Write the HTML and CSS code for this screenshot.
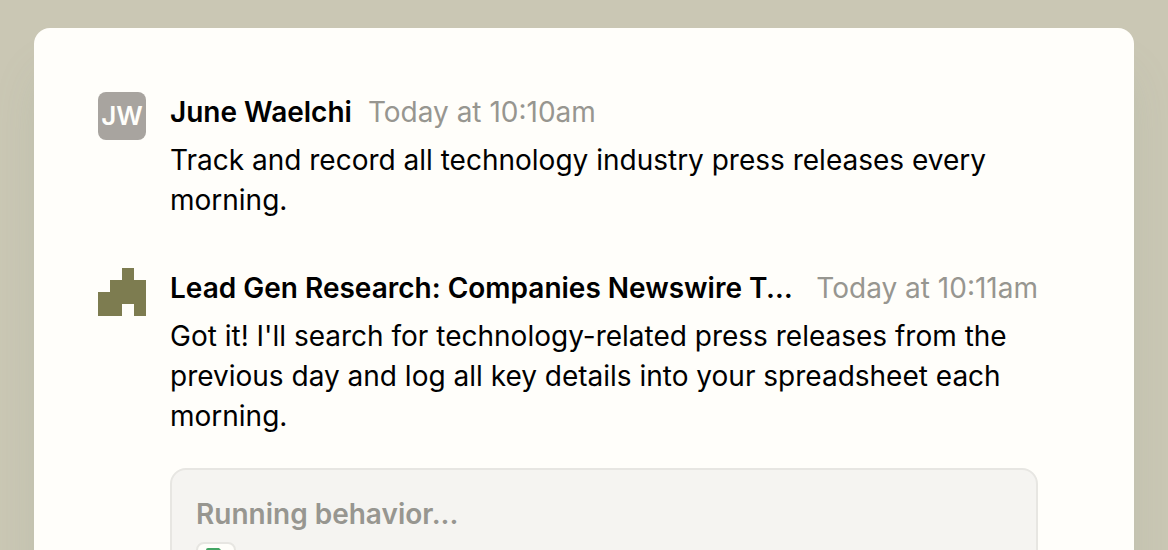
FILE: index.html
```html
<!DOCTYPE html>
<html lang="en">
  <head>
    <meta charset="utf-8" />
    <meta name="viewport" content="width=device-width, initial-scale=1.0" />
    <link rel="stylesheet" href="styles.css">
    <title>Lead Gen Research</title>
  </head>

  <body>
    <main class="thread">
      <article class="message">
        <div class="avatar initials">JW</div>
        <div class="content">
          <header class="meta">
            <h2 class="author">June Waelchi</h2>
            <time class="time">Today at 10:10am</time>
          </header>
          <p class="text">Track and record all technology industry press releases every morning.</p>
        </div>
      </article>

      <article class="message">
        <svg class="avatar" viewBox="0 0 4 4" shape-rendering="crispEdges" aria-hidden="true">
          <path fill="#7d7c50" d="M2 0h1v1h1v3H3V3H2v1H0V2h1V1h1z" />
        </svg>
        <div class="content">
          <header class="meta">
            <h2 class="author">Lead Gen Research: Companies Newswire Tracker</h2>
            <time class="time">Today at 10:11am</time>
          </header>
          <p class="text">Got it! I'll search for technology-related press releases from the previous day and log all key details into your spreadsheet each morning.</p>

          <section class="behavior">
            <h3 class="behavior-title">Running behavior...</h3>
            <div class="app">
              <svg class="app-icon" viewBox="0 0 24 24" aria-hidden="true">
                <path fill="#43a563" d="M4 0h11l6 6v16a2 2 0 0 1-2 2H4a2 2 0 0 1-2-2V2a2 2 0 0 1 2-2z" />
                <path fill="#fff" d="M7 11h9v8H7zM8 12v2h3v-2zm4 0v2h3v-2zm-4 3v3h3v-3zm4 0v3h3v-3z" fill-rule="evenodd" />
              </svg>
            </div>
          </section>
        </div>
      </article>
    </main>
  </body>
</html>
```
FILE: styles.css
```css
* {
  box-sizing: border-box;
}

body {
  margin: 0;
  height: 100vh;
  padding: 28px 34px 0;
  overflow: hidden;
  background: #cac7b4;
  color: #000;
  font-family: Inter, sans-serif;
  font-size: 28px;
  line-height: 40px;
}

h2,
h3,
p {
  margin: 0;
  font-size: inherit;
}

.thread {
  display: flex;
  flex-direction: column;
  gap: 48px;
  padding: 64px 96px 64px 64px;
  border-radius: 16px;
  background: #fffefa;
  box-shadow: 0 40px 50px -10px rgba(120, 150, 135, 0.2);
}

.message {
  display: flex;
  gap: 24px;
}

.avatar {
  flex: none;
  width: 48px;
  height: 48px;
}

.initials {
  border-radius: 8px;
  background: #a8a49f;
  color: #fffefa;
  font-size: 26px;
  font-weight: 600;
  line-height: 48px;
  text-align: center;
}

.content {
  flex: 1;
  min-width: 0;
}

.meta {
  display: flex;
  gap: 16px;
  margin-bottom: 8px;
}

.author {
  overflow: hidden;
  font-weight: 600;
  text-overflow: ellipsis;
  white-space: nowrap;
}

.time {
  flex: none;
  color: #979690;
}

.behavior {
  margin-top: 32px;
  padding: 24px;
  border: 2px solid #e7e6e2;
  border-radius: 16px;
  background: #f5f4f1;
}

.behavior-title {
  margin-bottom: 8px;
  color: #979690;
  font-weight: 600;
}

.app {
  display: flex;
  justify-content: center;
  width: 40px;
  padding: 4px;
  border: 2px solid #e7e6e2;
  border-radius: 8px;
  background: #fffefa;
}

.app-icon {
  width: 24px;
  height: 24px;
}
```
